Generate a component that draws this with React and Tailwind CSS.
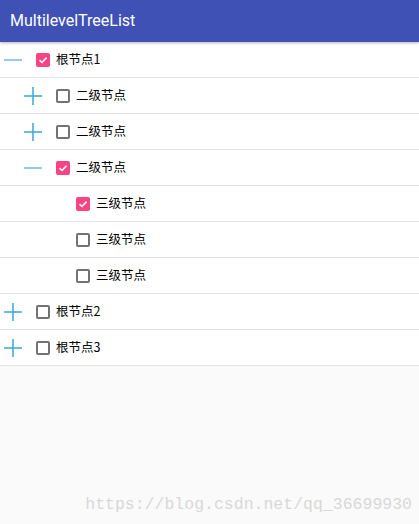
import React from "react";

const rows = [
  { level: 0, icon: "minus", checked: true, label: "根节点1" },
  { level: 1, icon: "plus", checked: false, label: "二级节点" },
  { level: 1, icon: "plus", checked: false, label: "二级节点" },
  { level: 1, icon: "minus", checked: true, label: "二级节点" },
  { level: 2, icon: null, checked: true, label: "三级节点" },
  { level: 2, icon: null, checked: false, label: "三级节点" },
  { level: 2, icon: null, checked: false, label: "三级节点" },
  { level: 0, icon: "plus", checked: false, label: "根节点2" },
  { level: 0, icon: "plus", checked: false, label: "根节点3" },
];

const pad = ["pl-[4px]", "pl-[24px]", "pl-[44px]"];

function Icon({ type }) {
  if (!type) return <span className="block w-[18px] h-[18px] shrink-0" />;
  return (
    <svg width="18" height="18" viewBox="0 0 18 18" className="shrink-0 block">
      <line x1="0" y1="9" x2="18" y2="9" stroke={type === "minus" ? "#6dbde3" : "#3aa6dc"} strokeWidth="1.5" />
      {type === "plus" && <line x1="9" y1="0" x2="9" y2="18" stroke="#3aa6dc" strokeWidth="1.5" />}
    </svg>
  );
}

function Check({ checked }) {
  if (checked)
    return (
      <div className="ml-[14px] w-[14px] h-[14px] rounded-[2px] bg-[#fb4283] flex items-center justify-center shrink-0">
        <svg width="10" height="10" viewBox="0 0 10 10">
          <path d="M1.5 5.2 L4 7.5 L8.6 2.6" fill="none" stroke="white" strokeWidth="1.6" />
        </svg>
      </div>
    );
  return <div className="ml-[14px] w-[14px] h-[14px] rounded-[2px] border-2 border-[#737373] shrink-0" />;
}

export default function App() {
  return (
    <div className="relative w-[419px] h-[524px] bg-[#fafafa] overflow-hidden flex flex-col">
      <div className="h-[42px] bg-[#3f51b5] flex items-center pl-[10px] shadow-[0_1px_3px_rgba(0,0,0,0.3)] z-10 shrink-0">
        <span className="text-white text-[16px] font-['Roboto',sans-serif]">MultilevelTreeList</span>
      </div>
      <div className="bg-white">
        {rows.map((r, i) => (
          <div key={i} className={`h-[36px] border-b border-[#e3e3e3] flex items-center ${pad[r.level]}`}>
            <Icon type={r.icon} />
            <Check checked={r.checked} />
            <span className="ml-[6px] text-[12.5px] text-black font-['Noto_Sans_CJK_SC','Noto_Sans',sans-serif] leading-none">
              {r.label}
            </span>
          </div>
        ))}
      </div>
      <div className="absolute right-[7px] bottom-[6px] text-[16.5px] text-[#d8d8d8] font-['Liberation_Mono',monospace]">
        https://blog.csdn.net/qq_36699930
      </div>
    </div>
  );
}
